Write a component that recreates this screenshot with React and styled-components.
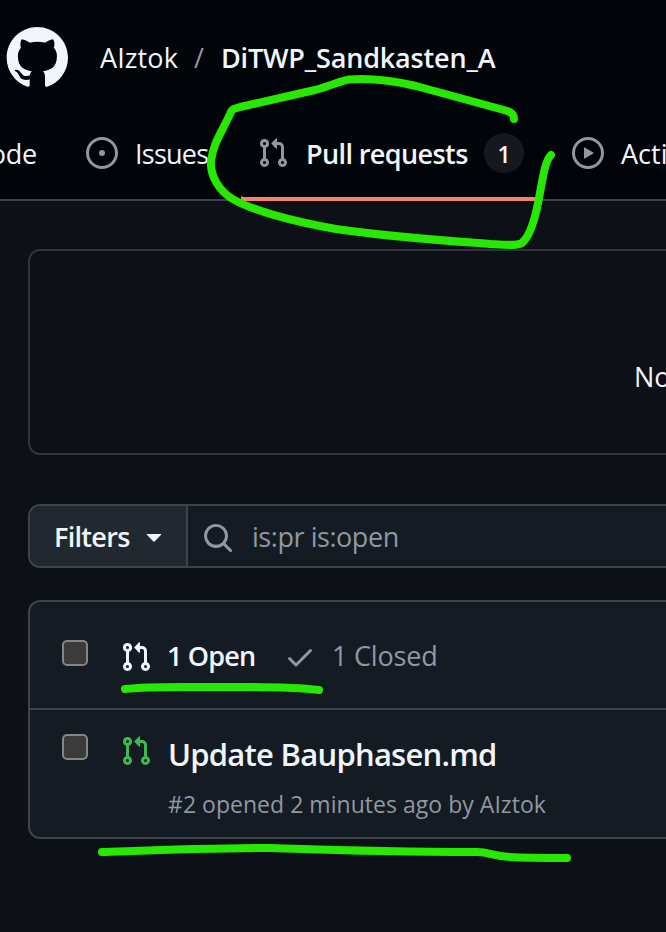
import React from "react";
import styled, { createGlobalStyle } from "styled-components";

const Global = createGlobalStyle`
  * { box-sizing: border-box; }
  body { margin: 0; background: #0d1117; overflow: hidden; }
`;

const Page = styled.div`
  position: relative;
  width: 666px;
  height: 932px;
  overflow: hidden;
  background: #0d1117;
  color: #f0f6fc;
  font-family: "Open Sans", sans-serif;
  font-size: 27px;
`;

const Text = styled.span`
  display: block;
  flex: none;
  white-space: pre;
  width: ${(p) => (p.$w ? `${p.$w}px` : "auto")};
  font-size: ${(p) => p.$size || 27}px;
  line-height: 40px;
  font-weight: ${(p) => (p.$bold ? 600 : 400)};
  letter-spacing: ${(p) => p.$track || 0}px;
  color: ${(p) => (p.$muted ? "#9198a1" : "#f0f6fc")};
`;

const Svg = styled.svg`
  display: block;
  flex: none;
  fill: ${(p) => p.$color || "#9198a1"};
`;

const Header = styled.header`
  height: 201px;
  background: #010409;
  border-bottom: 2px solid #3d444d;
`;

const TitleBar = styled.div`
  display: flex;
  align-items: flex-start;
  height: 117px;
  padding: 25px 0 0 4px;
`;

const Crumbs = styled.nav`
  display: flex;
  padding: 13px 0 0 32px;
`;

const Tabs = styled.nav`
  display: flex;
  height: 84px;
  width: 760px;
`;

const Tab = styled.div`
  display: flex;
  flex: none;
  align-items: center;
  justify-content: ${(p) => (p.$end ? "flex-end" : "flex-start")};
  gap: 17px;
  height: 84px;
  width: ${(p) => p.$w}px;
  padding: 0 ${(p) => (p.$end ? 33 : 0)}px 12px ${(p) => p.$pad ?? 16}px;
  box-shadow: ${(p) => (p.$active ? "inset 0 -4px 0 #f78166" : "none")};
  border-radius: 2px;
`;

const TabLabel = styled(Text)`
  padding-top: 2px;
`;

const Counter = styled.span`
  display: grid;
  place-items: center;
  flex: none;
  width: 40px;
  height: 40px;
  padding-top: 1px;
  border-radius: 50%;
  background: #15191f;
  font-size: 23px;
  font-weight: 600;
`;

const Main = styled.main`
  width: 740px;
  padding: 48px 0 0 28px;
`;

const Notice = styled.section`
  height: 206px;
  border: 2px solid #2f353d;
  border-radius: 12px;
  padding: 106px 0 0 604px;
`;

const Search = styled.div`
  display: flex;
  height: 64px;
  margin-top: 49px;
  border: 2px solid #3d444d;
  border-radius: 12px;
  background: #151b23;
  overflow: hidden;
`;

const FilterButton = styled.div`
  display: flex;
  align-items: center;
  width: 158px;
  padding-left: 24px;
  background: #212830;
  border-right: 2px solid #3d444d;
`;

const Query = styled.div`
  display: flex;
  align-items: center;
  gap: 18px;
  padding-left: 14px;
`;

const QueryIcon = styled.span`
  padding-top: 4px;
`;

const List = styled.section`
  height: 239px;
  margin-top: 32px;
  border: 2px solid #3d444d;
  border-radius: 12px;
  background: #151b23;
`;

const ListHeader = styled.div`
  display: flex;
  height: 108px;
  padding: 38px 0 0 32px;
  border-bottom: 2px solid #3d444d;
`;

const Row = styled.div`
  display: flex;
  padding: 24px 0 0 32px;
`;

const Checkbox = styled.span`
  flex: none;
  width: 26px;
  height: 26px;
  margin-right: 32px;
  border: 2px solid #858585;
  border-radius: 5px;
  background: #3b3b3b;
`;

const State = styled.div`
  display: flex;
  align-items: center;
  height: 32px;
  width: ${(p) => p.$w}px;
  margin-top: 1px;
  gap: ${(p) => p.$gap}px;
`;

const StateLabel = styled(Text)`
  padding-bottom: 2px;
`;

const RowIcon = styled.div`
  margin: 1px 16px 0 0;
`;

const Details = styled.div`
  display: flex;
  flex-direction: column;
  gap: 10px;
`;

const Ink = styled.svg`
  position: absolute;
  inset: 0;
  fill: none;
  stroke: #27e800;
  stroke-width: 8;
  stroke-linecap: round;
  stroke-linejoin: round;
`;

const PATHS = {
  pr: "M1.5 3.25a2.25 2.25 0 1 1 3 2.122v5.256a2.251 2.251 0 1 1-1.5 0V5.372A2.25 2.25 0 0 1 1.5 3.25Zm5.677-.177L9.573.677A.25.25 0 0 1 10 .854V2.5h1A2.5 2.5 0 0 1 13.5 5v5.628a2.251 2.251 0 1 1-1.5 0V5a1 1 0 0 0-1-1h-1v1.646a.25.25 0 0 1-.427.177L7.177 3.427a.25.25 0 0 1 0-.354ZM3.75 2.5a.75.75 0 1 0 0 1.5.75.75 0 0 0 0-1.5Zm0 9.5a.75.75 0 1 0 0 1.5.75.75 0 0 0 0-1.5Zm8.25.75a.75.75 0 1 0 1.5 0 .75.75 0 0 0-1.5 0Z",
  issue:
    "M8 9.5a1.5 1.5 0 1 0 0-3 1.5 1.5 0 0 0 0 3ZM8 0a8 8 0 1 1 0 16A8 8 0 0 1 8 0ZM1.5 8a6.5 6.5 0 1 0 13 0 6.5 6.5 0 0 0-13 0Z",
  play: "M8 0a8 8 0 1 1 0 16A8 8 0 0 1 8 0ZM1.5 8a6.5 6.5 0 1 0 13 0 6.5 6.5 0 0 0-13 0Zm4.879-2.773 4.264 2.559a.25.25 0 0 1 0 .428l-4.264 2.559A.25.25 0 0 1 6 10.559V5.442a.25.25 0 0 1 .379-.215Z",
  search:
    "M10.68 11.74a6 6 0 0 1-7.922-8.982 6 6 0 0 1 8.982 7.922l3.04 3.04a.749.749 0 0 1-.326 1.275.749.749 0 0 1-.734-.215ZM11.5 7a4.499 4.499 0 1 0-8.997 0A4.499 4.499 0 0 0 11.5 7Z",
  check:
    "M13.78 4.22a.75.75 0 0 1 0 1.06l-7.25 7.25a.75.75 0 0 1-1.06 0L2.22 9.28a.751.751 0 0 1 .018-1.042.751.751 0 0 1 1.042-.018L6 10.94l6.72-6.72a.75.75 0 0 1 1.06 0Z",
  caret:
    "m4.427 7.427 3.396 3.396a.25.25 0 0 0 .354 0l3.396-3.396A.25.25 0 0 0 11.396 7H4.604a.25.25 0 0 0-.177.427Z",
};

const Icon = ({ name, color }) => (
  <Svg width="32" height="32" viewBox="0 0 16 16" $color={color}>
    <path d={PATHS[name]} />
  </Svg>
);

const Mark = () => (
  <Svg width="64" height="64" viewBox="0 0 24 24" $color="#f0f6fc">
    <path d="M12.5.75C6.146.75 1 5.896 1 12.25c0 5.089 3.292 9.387 7.863 10.91.575.101.79-.244.79-.546 0-.273-.014-1.178-.014-2.142-2.889.532-3.636-.704-3.866-1.35-.13-.331-.69-1.352-1.18-1.625-.402-.216-.977-.748-.014-.762.906-.014 1.553.834 1.769 1.179 1.035 1.74 2.688 1.25 3.349.948.1-.747.402-1.25.733-1.538-2.559-.287-5.232-1.279-5.232-5.678 0-1.25.445-2.285 1.178-3.09-.115-.288-.517-1.467.115-3.048 0 0 .963-.302 3.163 1.179.92-.259 1.897-.388 2.875-.388.977 0 1.955.13 2.875.388 2.2-1.495 3.162-1.179 3.162-1.179.633 1.581.23 2.76.115 3.048.733.805 1.179 1.825 1.179 3.09 0 4.413-2.688 5.39-5.247 5.678.417.36.776 1.05.776 2.128 0 1.538-.014 2.774-.014 3.162 0 .302.216.662.79.547C20.709 21.637 24 17.324 24 12.25 24 5.896 18.854.75 12.5.75Z" />
  </Svg>
);

export default function App() {
  return (
    <Page>
      <Global />
      <Header>
        <TitleBar>
          <Mark />
          <Crumbs>
            <Text $w={94} $track={0.1}>AIztok</Text>
            <Text $w={27} $muted>/</Text>
            <Text $bold $track={-0.18}>DiTWP_Sandkasten_A</Text>
          </Crumbs>
        </TitleBar>
        <Tabs>
          <Tab $w={70} $pad={0} $end>
            <TabLabel $track={-0.2}>Code</TabLabel>
          </Tab>
          <Tab $w={171}>
            <Icon name="issue" />
            <TabLabel $track={-0.75}>Issues</TabLabel>
          </Tab>
          <Tab $w={298} $active>
            <Icon name="pr" />
            <TabLabel $bold $w={161} $track={-0.6}>Pull requests</TabLabel>
            <Counter>1</Counter>
          </Tab>
          <Tab $w={200} $pad={33}>
            <Icon name="play" />
            <TabLabel>Actions</TabLabel>
          </Tab>
        </Tabs>
      </Header>
      <Main>
        <Notice>
          <Text>Now</Text>
        </Notice>
        <Search>
          <FilterButton>
            <TabLabel $bold $w={84} $track={-0.7}>Filters</TabLabel>
            <Icon name="caret" color="#f0f6fc" />
          </FilterButton>
          <Query>
            <QueryIcon>
              <Icon name="search" />
            </QueryIcon>
            <TabLabel $muted $track={-0.45}>is:pr is:open</TabLabel>
          </Query>
        </Search>
        <List>
          <ListHeader>
            <Checkbox />
            <State $w={164} $gap={15}>
              <Icon name="pr" color="#f0f6fc" />
              <StateLabel $bold $track={-0.8}>1 Open</StateLabel>
            </State>
            <State $gap={16}>
              <Icon name="check" />
              <StateLabel $muted $track={-0.2}>1 Closed</StateLabel>
            </State>
          </ListHeader>
          <Row>
            <Checkbox />
            <RowIcon>
              <Icon name="pr" color="#3fb950" />
            </RowIcon>
            <Details>
              <Text $bold $size={31} $track={-0.75}>Update Bauphasen.md</Text>
              <Text $muted $size={23} $track={0.03}>#2 opened 2 minutes ago by AIztok</Text>
            </Details>
          </Row>
        </List>
      </Main>
      <Ink width="666" height="932" viewBox="0 0 666 932">
        <path d="M514 119C514 114 511 112 504 110L416 86C390 80 368 78 349 79.500C340 81 330 86 315 90L240 107C233 109 232 109 230 114C224 128 213 143 211 161C210 176 219 190 231 198C248 209 290 221 336 229C390 237 450 241 490 244C507 245 517 246 522 243C530 236 535 220 539 198C543 177 545 161 551 155" />
        <path d="M125 689C150 686 180 687 210 687C250 687 285 686 319 690" />
        <path d="M102 852C160 850 215 848 270 848C330 850 380 852 477 852C490 852 492 856 510 857C525 858 545 858 567 858" />
      </Ink>
    </Page>
  );
}
